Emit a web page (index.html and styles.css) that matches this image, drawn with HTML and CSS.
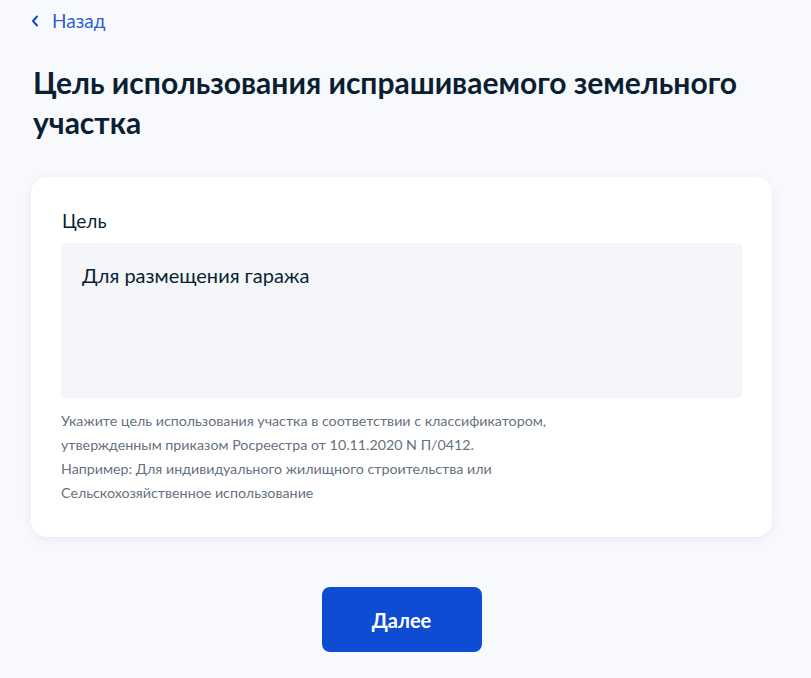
FILE: index.html
```html
<!DOCTYPE html>
<html lang="ru">
<head>
<meta charset="UTF-8">
<meta name="viewport" content="width=device-width, initial-scale=1.0">
<title>Цель использования участка</title>
<link rel="stylesheet" href="styles.css">
</head>
<body>
  <div class="page">
    <a class="back-link" href="#">
      <svg class="back-icon" width="8" height="12" viewBox="0 0 8 12" aria-hidden="true">
        <path d="M6 1.5 L2 6 L6 10.5" fill="none" stroke="#0d4cd3" stroke-width="2" stroke-linecap="round" stroke-linejoin="round"/>
      </svg>
      <span>Назад</span>
    </a>

    <h1 class="title">Цель использования испрашиваемого земельного участка</h1>

    <form class="card" action="#" method="POST">
      <label class="field-label" for="purpose">Цель</label>
      <textarea class="field-input" id="purpose" name="purpose">Для размещения гаража</textarea>
      <p class="field-hint">
        Укажите цель использования участка в соответствии с классификатором,
        утвержденным приказом Росреестра от 10.11.2020 N П/0412.<br>
        Например: Для индивидуального жилищного строительства или
        Сельскохозяйственное использование
      </p>
    </form>

    <div class="actions">
      <button type="button" class="btn">Далее</button>
    </div>
  </div>
</body>
</html>
```

FILE: styles.css
```css
body {
  font-family: Lato, "Open Sans", Arial, sans-serif;
  background-color: #f8f9fd;
  color: #0b1f33;
  margin: 0;
  padding: 0;
}
.page {
  width: 741px;
  padding: 9px 0 26px 31px;
}
.back-link {
  display: inline-flex;
  align-items: center;
  gap: 13px;
  color: #2f5fd0;
  font-size: 19px;
  text-decoration: none;
  line-height: 24px;
}
.back-icon {
  display: block;
}
.title {
  font-size: 30px;
  font-weight: 700;
  line-height: 40px;
  margin: 29px 0 35px 2px;
  max-width: 720px;
}
.card {
  background-color: #fff;
  border-radius: 16px;
  box-shadow: 0 2px 10px rgba(40, 70, 160, 0.08);
  padding: 32px 30px 32px 30px;
}
.field-label {
  display: block;
  font-size: 19px;
  line-height: 24px;
  margin: 0 0 10px 1px;
}
.field-input {
  display: block;
  width: 100%;
  height: 155px;
  box-sizing: border-box;
  background-color: #f4f6fa;
  border: none;
  border-radius: 4px;
  padding: 20px 21px;
  font-family: inherit;
  font-size: 20px;
  color: #0b1f33;
  resize: none;
}
.field-hint {
  margin: 11px 0 0 0;
  max-width: 540px;
  font-size: 14.25px;
  line-height: 24px;
  color: #66727f;
}
.actions {
  display: flex;
  justify-content: center;
  margin-top: 50px;
}
.btn {
  width: 160px;
  height: 65px;
  background-color: #0d4cd3;
  color: #fff;
  font-family: inherit;
  font-size: 20px;
  font-weight: 700;
  border: none;
  border-radius: 8px;
  cursor: pointer;
}
```
